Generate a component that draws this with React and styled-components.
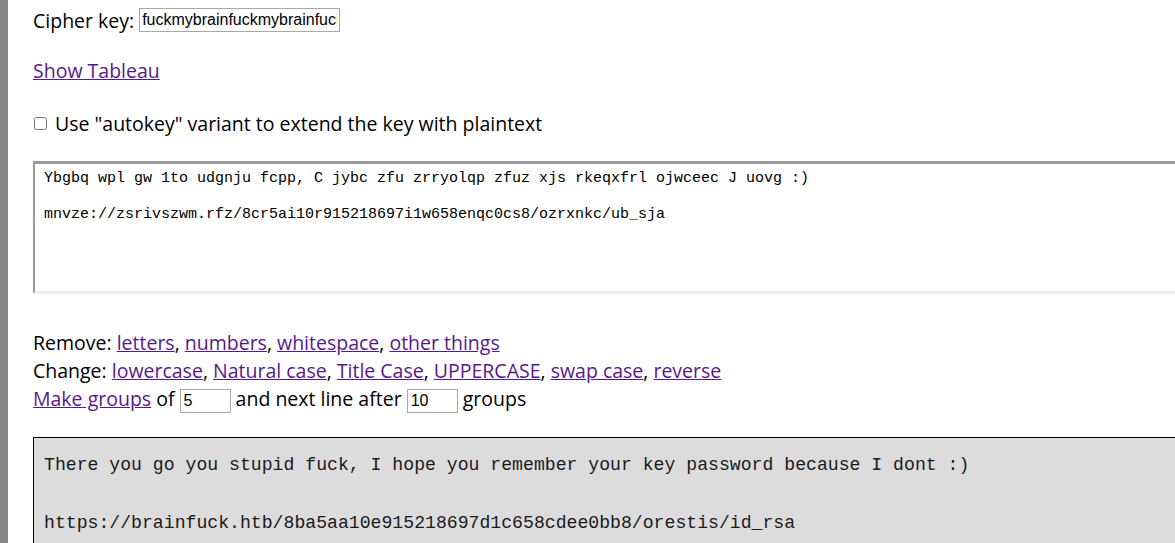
import React from 'react';
import styled, { createGlobalStyle } from 'styled-components';

const GlobalStyle = createGlobalStyle`
  html, body {
    margin: 0;
    padding: 0;
    background: #fff;
    overflow: hidden;
  }
`;

const cipherText =
  'Ybgbq wpl gw 1to udgnju fcpp, C jybc zfu zrryolqp zfuz xjs rkeqxfrl ojwceec J uovg :)\n\nmnvze://zsrivszwm.rfz/8cr5ai10r915218697i1w658enqc0cs8/ozrxnkc/ub_sja';

const App = () => {
  return (
    <>
      <GlobalStyle />
      <Page>
        <SideBar />
        <Content>
          <KeyRow>
            <Label>Cipher key:</Label>
            <KeyInput readOnly value="fuckmybrainfuckmybrainfuckmybrain" />
          </KeyRow>

          <TextLine $top={17}>
            <Link href="#">Show Tableau</Link>
          </TextLine>

          <CheckRow>
            <CheckBox type="checkbox" />
            <span>Use "autokey" variant to extend the key with plaintext</span>
          </CheckRow>

          <CipherArea readOnly value={cipherText} />

          <Tools>
            <TextLine>
              Remove: <Link href="#">letters</Link>, <Link href="#">numbers</Link>,{' '}
              <Link href="#">whitespace</Link>, <Link href="#">other things</Link>
            </TextLine>
            <TextLine>
              Change: <Link href="#">lowercase</Link>, <Link href="#">Natural case</Link>,{' '}
              <Link href="#">Title Case</Link>, <Link href="#">UPPERCASE</Link>,{' '}
              <Link href="#">swap case</Link>, <Link href="#">reverse</Link>
            </TextLine>
            <TextLine>
              <Link href="#">Make groups</Link> of <SmallInput readOnly value="5" /> and next line after{' '}
              <SmallInput readOnly value="10" /> groups
            </TextLine>
          </Tools>

          <ResultBox>
            <ResultLine>There you go you stupid fuck, I hope you remember your key password because I dont :)</ResultLine>
            <ResultLine>&nbsp;</ResultLine>
            <ResultLine>https://brainfuck.htb/8ba5aa10e915218697d1c658cdee0bb8/orestis/id_rsa</ResultLine>
          </ResultBox>
        </Content>
      </Page>
    </>
  );
};

export default App;

const Page = styled.div`
  display: flex;
  width: 1175px;
  height: 543px;
  overflow: hidden;
  font-family: 'Open Sans', 'Liberation Sans', sans-serif;
  font-size: 19.5px;
  color: #000;
`;

const SideBar = styled.div`
  flex: 0 0 8px;
  background: #878787;
`;

const Content = styled.div`
  flex: 1;
  padding-left: 25px;
  min-width: 0;
`;

const KeyRow = styled.div`
  display: flex;
  align-items: center;
  height: 40px;
  gap: 5px;
`;

const Label = styled.span``;

const KeyInput = styled.input`
  box-sizing: border-box;
  width: 201px;
  height: 24px;
  padding: 0 2px;
  border: 1px solid #a9a9a9;
  font-family: 'Liberation Sans', Arial, sans-serif;
  font-size: 16px;
  color: #000;
  outline: none;
`;

const TextLine = styled.div`
  height: 28px;
  line-height: 28px;
  margin-top: ${({ $top }) => ($top ? `${$top}px` : 0)};
  white-space: nowrap;
`;

const Link = styled.a`
  color: #551a8b;
  text-decoration: underline;
`;

const CheckRow = styled.label`
  display: flex;
  align-items: center;
  height: 28px;
  margin-top: 24px;
  gap: 8px;
`;

const CheckBox = styled.input`
  width: 13px;
  height: 13px;
  margin: 0 0 0 1px;
`;

const CipherArea = styled.textarea`
  display: block;
  box-sizing: border-box;
  width: 1170px;
  height: 133px;
  margin-top: 24px;
  padding: 6px 9px;
  border-style: solid;
  border-width: 3px 0 3px 2px;
  border-color: #9a9a9a #eee #eee #9a9a9a;
  font-family: 'Liberation Mono', 'Courier New', monospace;
  font-size: 15px;
  line-height: 18px;
  color: #000;
  resize: none;
  outline: none;
  overflow: hidden;
`;

const Tools = styled.div`
  margin-top: 35px;
`;

const SmallInput = styled.input`
  box-sizing: border-box;
  width: 51px;
  height: 24px;
  padding: 0 3px;
  border: 1px solid #a9a9a9;
  font-family: 'Liberation Sans', Arial, sans-serif;
  font-size: 16px;
  vertical-align: middle;
  outline: none;
`;

const ResultBox = styled.div`
  box-sizing: border-box;
  width: 1200px;
  margin-top: 24px;
  padding: 13px 10px;
  border: 1px solid #000;
  background: #dcdcdc;
  font-family: 'Liberation Mono', 'Courier New', monospace;
  font-size: 18.15px;
  line-height: 29px;
  color: #1a1a1a;
`;

const ResultLine = styled.div`
  white-space: pre;
`;
